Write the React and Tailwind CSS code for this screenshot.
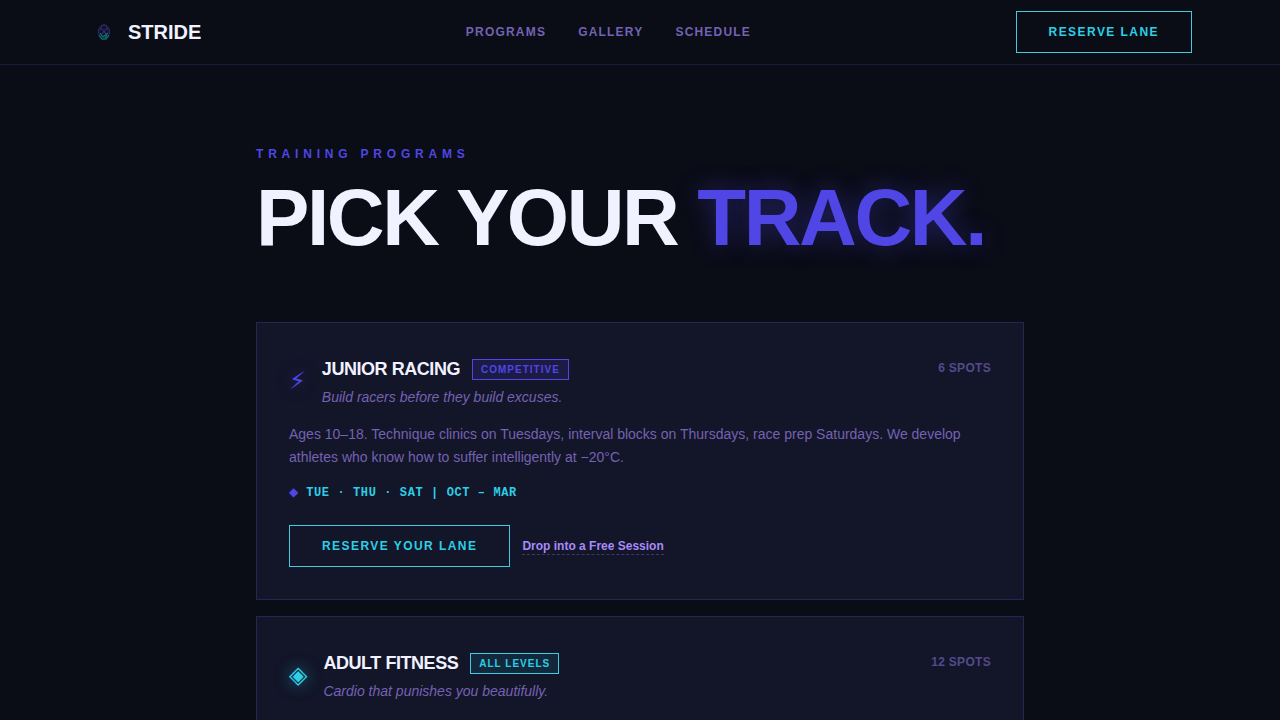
const programs = [
  {
    icon: '⚡',
    iconClass: 'text-[#4f46e5] [text-shadow:0_0_16px_rgba(79,70,229,0.5)]',
    title: 'JUNIOR RACING',
    badge: 'COMPETITIVE',
    badgeClass: 'border-[#4f46e5] bg-[#4f46e5]/15 text-[#4f46e5]',
    tagline: 'Build racers before they build excuses.',
    spots: '6 SPOTS',
    text: 'Ages 10–18. Technique clinics on Tuesdays, interval blocks on Thursdays, race prep Saturdays. We develop athletes who know how to suffer intelligently at −20°C.',
    schedule: 'TUE · THU · SAT | OCT – MAR',
  },
  {
    icon: '◈',
    iconClass: 'text-[#2ccfe6] [text-shadow:0_0_16px_rgba(34,211,238,0.6)]',
    title: 'ADULT FITNESS',
    badge: 'ALL LEVELS',
    badgeClass: 'border-[#3fcbe0] bg-[#22d3ee]/10 text-[#2ccfe6]',
    tagline: 'Cardio that punishes you beautifully.',
    spots: '12 SPOTS',
  },
];

const outline =
  'border border-[#3fcbe0] px-8 py-3 text-xs font-bold tracking-[0.12em] text-[#2ccfe6]';

function Logo() {
  return (
    <svg className="size-8" viewBox="0 0 32 32" fill="none" aria-hidden="true">
      <path d="M16 8c-3.500 0-6 3-6 7v5c1 2.500 3 4 6 4s5-1.500 6-4v-5c0-4-2.500-7-6-7z" fill="#171436" opacity=".8" />
      <path d="M12 14c0-3 2-5 4-5s4 2 4 5" stroke="#42307c" strokeWidth="1.400" opacity=".7" />
      <path d="M10.500 13v5M21.500 13v5" stroke="#33306b" strokeWidth="1.200" opacity=".8" />
      <path d="M13 12l5 6M19 12l-5 6" stroke="#403a8a" strokeWidth="1" opacity=".8" />
      <path d="M11 19l3 4h4l3-4" stroke="#08766f" strokeWidth="1.400" opacity=".85" />
      <path d="M12 17l3 4 5-4M17 22l2-3" stroke="#0a9485" strokeWidth="1.100" opacity=".8" />
    </svg>
  );
}

function ProgramCard({ program }) {
  return (
    <article className="border border-[#26264f] bg-[#131528] p-8">
      <div className="flex items-start justify-between">
        <div className="flex items-center gap-4">
          <span className={`font-['DejaVu_Sans',sans-serif] text-2xl ${program.iconClass}`} aria-hidden="true">
            {program.icon}
          </span>
          <div>
            <div className="flex items-center gap-3">
              <h2 className="text-lg font-bold tracking-tight text-[#f0f2ff]">{program.title}</h2>
              <span className={`border px-2 py-0.5 text-[10px] leading-[15px] font-bold tracking-[0.1em] ${program.badgeClass}`}>
                {program.badge}
              </span>
            </div>
            <p className="mt-1 text-sm text-[#7462b3] italic">{program.tagline}</p>
          </div>
        </div>
        <span className="pt-1 text-xs leading-[18px] font-bold tracking-wide text-[#544a8c]">{program.spots}</span>
      </div>
      {program.text && <p className="mt-4 text-sm leading-[23px] text-[#7462b3]">{program.text}</p>}
      {program.schedule && (
        <>
          <p className="mt-4 flex items-start gap-2 text-xs font-bold">
            <span className="font-['DejaVu_Sans',sans-serif] leading-[14px] font-normal text-[#4f46e5]" aria-hidden="true">◆</span>
            <span className="font-['Liberation_Mono',monospace] tracking-wider text-[#2ccfe6]">{program.schedule}</span>
          </p>
          <div className="mt-6 flex items-center gap-3">
            <button type="button" className={outline}>RESERVE YOUR LANE</button>
            <a href="#free-session" className="border-b border-dashed border-[#a78bfa]/30 text-xs font-bold text-[#a78bfa]">
              Drop into a Free Session
            </a>
          </div>
        </>
      )}
    </article>
  );
}

export default function App() {
  return (
    <div className="min-h-screen bg-[#0a0c16] font-['Liberation_Sans',Arial,sans-serif]">
      <header className="fixed inset-x-0 top-0 z-10 border-b border-[#1a1a3a] bg-[#0a0c16]">
        <div className="mx-auto flex h-16 max-w-[1200px] items-center justify-between px-12">
          <a href="#home" className="flex items-center gap-2 text-xl font-bold text-[#f0f2ff]">
            <Logo />
            STRIDE
          </a>
          <nav className="flex gap-8 text-xs font-bold tracking-[0.1em] text-[#7462b3]">
            <a href="#programs">PROGRAMS</a>
            <a href="#gallery">GALLERY</a>
            <a href="#schedule">SCHEDULE</a>
          </nav>
          <button type="button" className={outline}>RESERVE LANE</button>
        </div>
      </header>
      <main id="programs" className="mx-auto max-w-3xl pt-36 pb-20">
        <p className="text-xs leading-5 font-bold tracking-[0.4em] text-[#4f46e5]">TRAINING PROGRAMS</p>
        <h1 className="mt-3.5 text-[80px] leading-none font-bold tracking-[-0.03em] text-[#f0f2ff]">
          PICK YOUR{' '}
          <span className="text-[#4f46e5] [text-shadow:0_0_24px_rgba(79,70,229,0.4)]">TRACK.</span>
        </h1>
        <div className="mt-16 flex flex-col gap-4">
          {programs.map((program) => (
            <ProgramCard key={program.title} program={program} />
          ))}
        </div>
      </main>
    </div>
  );
}
